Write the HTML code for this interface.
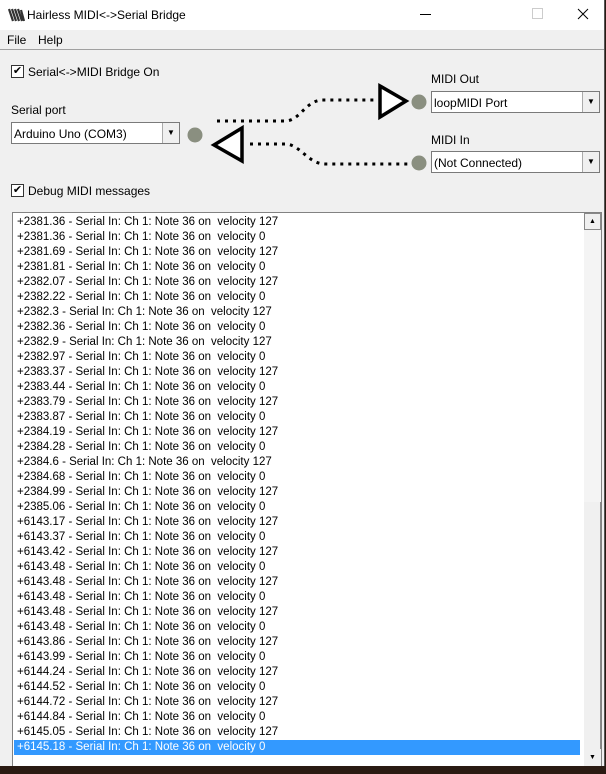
<!DOCTYPE html>
<html><head><style>
body{margin:0;width:606px;height:774px;background:#2a1a12;font-family:"Liberation Sans",sans-serif;font-size:12px;overflow:hidden;position:relative}
.win{position:absolute;left:0;top:0;width:604px;height:766px;background:#f0f0f0;border-right:1px solid #555}
.title{position:absolute;left:0;top:0;width:604px;height:30px;background:#fff}
.abs{position:absolute;white-space:nowrap}
.cb{position:absolute;width:11px;height:11px;border:1px solid #333;background:#fff;font-size:11px;line-height:11px;text-align:center}
.combo{position:absolute;height:22px;background:#fff;border:1px solid #7a7a7a;box-sizing:border-box}
.combo span{position:absolute;left:2px;top:4px}
.combo i{position:absolute;right:0;top:0;width:16px;height:20px;background:#f0f0f0;border-left:1px solid #aaa;font-style:normal;font-size:8px;text-align:center;line-height:20px}
.list{position:absolute;left:12px;top:212px;width:590px;height:554px;background:#fff;border:1px solid #828282;border-bottom:none;box-sizing:border-box}
.line{position:absolute;left:4px;height:15px;line-height:15px;white-space:pre;font-size:11.5px}
.sb{position:absolute;left:571px;top:0;width:17px;height:553px;background:#f4f4f4}
</style></head><body>
<div class="win">
<div class="title">
<svg class="abs" style="left:8px;top:7px" width="18" height="16" viewBox="0 0 18 16"><path d="M1 2 L5 14 M4 2 L8 14 M7 2 L11 14 M10 2 L14 14 M13 3 L16 14" stroke="#333" stroke-width="2.2"/></svg>
<div class="abs" style="left:27px;top:8px;font-size:12px">Hairless MIDI&lt;-&gt;Serial Bridge</div>
<div class="abs" style="left:420px;top:14px;width:11px;height:1px;background:#000"></div>
<div class="abs" style="left:532px;top:8px;width:9px;height:9px;border:1px solid #ccc"></div>
<svg class="abs" style="left:577px;top:8px" width="12" height="12"><path d="M1 1L11 11M11 1L1 11" stroke="#000" stroke-width="1"/></svg>
</div>
<div class="abs" style="left:7px;top:33px">File</div>
<div class="abs" style="left:38px;top:33px">Help</div>
<div class="abs" style="left:0;top:49px;width:604px;height:1px;background:#a0a0a0"></div>
<div class="cb" style="left:11px;top:65px">✔</div>
<div class="abs" style="left:28px;top:65px">Serial&lt;-&gt;MIDI Bridge On</div>
<div class="abs" style="left:11px;top:103px">Serial port</div>
<div class="combo" style="left:11px;top:122px;width:169px"><span>Arduino Uno (COM3)</span><i>▼</i></div>
<div class="abs" style="left:431px;top:72px">MIDI Out</div>
<div class="combo" style="left:431px;top:91px;width:169px"><span>loopMIDI Port</span><i>▼</i></div>
<div class="abs" style="left:431px;top:133px">MIDI In</div>
<div class="combo" style="left:431px;top:151px;width:169px"><span>(Not Connected)</span><i>▼</i></div>
<svg class="abs" style="left:0;top:0" width="606" height="200">
<path d="M217 121 H285 C300 121 305 101 322 100 H375" fill="none" stroke="#000" stroke-width="3" stroke-dasharray="3 5"/>
<path d="M250 144 H285 C300 144 308 164 325 164 H410" fill="none" stroke="#000" stroke-width="3" stroke-dasharray="3 5"/>
<path d="M380 86 L380 117 L406 101 Z" fill="#fff" stroke="#000" stroke-width="3.5"/>
<path d="M242 128 L242 161 L214 145 Z" fill="#fff" stroke="#000" stroke-width="3.5"/>
<circle cx="195" cy="135" r="7.5" fill="#8a8f80"/>
<circle cx="419" cy="102" r="7.5" fill="#8a8f80"/>
<circle cx="419" cy="163" r="7.5" fill="#8a8f80"/>
</svg>
<div class="cb" style="left:11px;top:184px">✔</div>
<div class="abs" style="left:28px;top:184px">Debug MIDI messages</div>
<div class="list" id="L">
<div class="sb">
<div style="position:absolute;left:0;top:0;width:17px;height:17px;background:#f0f0f0;border:1px solid #888;box-sizing:border-box;font-size:7px;text-align:center;line-height:15px">▲</div>
<div style="position:absolute;left:0;top:289px;width:17px;height:247px;background:#f0f0f0;border-right:1px solid #888;box-sizing:border-box"></div>
<div style="position:absolute;left:0;top:536px;width:17px;height:17px;background:#f0f0f0;font-size:7px;text-align:center;line-height:17px">▼</div>
</div>
</div>
</div>
<script>
var d=[["2381.36",127],["2381.36",0],["2381.69",127],["2381.81",0],["2382.07",127],["2382.22",0],["2382.3",127],["2382.36",0],["2382.9",127],["2382.97",0],["2383.37",127],["2383.44",0],["2383.79",127],["2383.87",0],["2384.19",127],["2384.28",0],["2384.6",127],["2384.68",0],["2384.99",127],["2385.06",0],["6143.17",127],["6143.37",0],["6143.42",127],["6143.48",0],["6143.48",127],["6143.48",0],["6143.48",127],["6143.48",0],["6143.86",127],["6143.99",0],["6144.24",127],["6144.52",0],["6144.72",127],["6144.84",0],["6145.05",127],["6145.18",0]];
var L=document.getElementById('L'),h='';
d.forEach(function(r,i){var s=i==d.length-1;h+='<div class="line" style="top:'+(2+i*15)+'px;'+(s?'left:1px;width:566px;padding-left:3px;background:#3399ff;color:#fff;box-sizing:border-box':'')+'">+'+r[0]+' - Serial In: Ch 1: Note 36 on  velocity '+r[1]+'</div>';});
L.insertAdjacentHTML('afterbegin',h);
</script>
</body></html>
